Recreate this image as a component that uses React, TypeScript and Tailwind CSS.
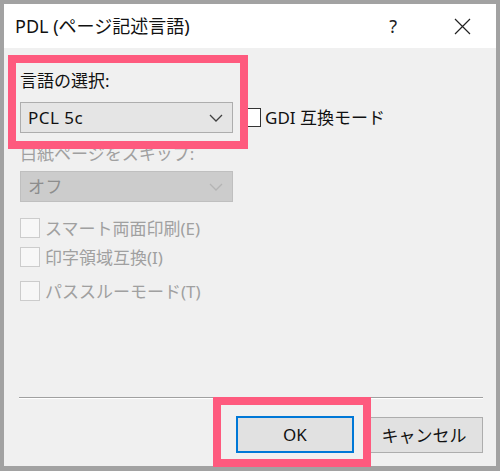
import { ReactNode } from 'react'

const font = '"Noto Sans", "Noto Sans CJK JP", sans-serif'

function Chevron({ disabled }: { disabled?: boolean }) {
  return (
    <svg width="14" height="8" viewBox="0 0 14 8" className="shrink-0">
      <path d="M1 1 L7 7 L13 1" fill="none" stroke={disabled ? '#b4b4b4' : '#404040'} strokeWidth="1.3" />
    </svg>
  )
}

function Combo({ value, disabled }: { value: string; disabled?: boolean }) {
  return (
    <div
      className={
        'w-[213px] h-[31px] flex items-center justify-between pl-[7px] pr-[9px] border ' +
        (disabled ? 'bg-[#cccccc] border-[#bfbfbf] text-[#8d8d8d]' : 'bg-[#e5e5e5] border-[#adadad] text-[#111]')
      }
    >
      <span className="text-[17px] leading-none tracking-[0.5px]">{value}</span>
      <Chevron disabled={disabled} />
    </div>
  )
}

function Check({ children, disabled }: { children: ReactNode; disabled?: boolean }) {
  return (
    <div className="flex items-center h-[20px]">
      <div
        className={
          'w-[20px] h-[20px] border shrink-0 ' +
          (disabled ? 'bg-[#f7f7f7] border-[#cccccc]' : 'bg-white border-[#333]')
        }
      />
      <span className={'ml-[5px] text-[17px] leading-none ' + (disabled ? 'text-[#a0a0a0]' : 'text-[#111]')}>
        {children}
      </span>
    </div>
  )
}

export default function App() {
  return (
    <div className="relative w-[500px] h-[471px]" style={{ fontFamily: font }}>
      <div className="w-full h-full flex flex-col border-[4px] border-b-[5px] border-[#a2a2a2]">
        {/* title bar */}
        <div className="h-[44px] bg-white flex items-center shrink-0">
          <span className="ml-[11px] text-[18px] text-[#111] leading-none">PDL (ページ記述言語)</span>
          <span className="ml-auto text-[18px] text-[#222] leading-none mr-[57px]">?</span>
          <svg width="17" height="17" viewBox="0 0 17 17" className="mr-[25px]">
            <path d="M1 1 L16 16 M16 1 L1 16" stroke="#222" strokeWidth="1.2" />
          </svg>
        </div>

        {/* body */}
        <div className="flex-1 bg-[#f0f0f0] flex flex-col px-[16px]">
          <div className="mt-[22px] h-[20px] flex items-center text-[17px] text-[#111] leading-none">言語の選択:</div>
          <div className="mt-[12px] flex items-center">
            <Combo value="PCL 5c" />
            <div className="ml-[10px] w-[18px] h-[19px] bg-white border border-[#333] shrink-0" />
            <span className="ml-[4px] text-[17px] text-[#111] leading-none">GDI 互換モード</span>
          </div>

          <div className="mt-[10px] h-[20px] flex items-center text-[17px] text-[#a0a0a0] leading-none">
            白紙ページをスキップ:
          </div>
          <div className="mt-[8px]">
            <Combo value="オフ" disabled />
          </div>

          <div className="mt-[16px] flex flex-col gap-[9px]">
            <Check disabled>スマート両面印刷(E)</Check>
            <Check disabled>印字領域互換(I)</Check>
            <div className="mt-[5px]">
              <Check disabled>パススルーモード(T)</Check>
            </div>
          </div>

          <div className="flex-1" />

          <div className="mr-[-3px] h-[2px] border-t border-[#a0a0a0] border-b border-b-white ml-[-1px]" />

          <div className="mt-[17px] mb-[13px] flex justify-end gap-[11px] mr-[-3px]">
            <button className="w-[118px] h-[37px] bg-[#e1e1e1] border-2 border-[#0078d7] text-[17px] text-[#111] leading-none">
              OK
            </button>
            <button className="w-[118px] h-[36px] mt-[1px] bg-[#e1e1e1] border border-[#adadad] text-[17px] text-[#111] leading-none">
              キャンセル
            </button>
          </div>
        </div>
      </div>

      {/* annotation highlights */}
      <div className="absolute left-[8px] top-[55px] w-[240px] h-[94px] border-[8px] border-[#fe5a7e]" />
      <div className="absolute left-[213px] top-[397px] w-[158px] h-[70px] border-[8px] border-[#fe5a7e]" />
    </div>
  )
}
